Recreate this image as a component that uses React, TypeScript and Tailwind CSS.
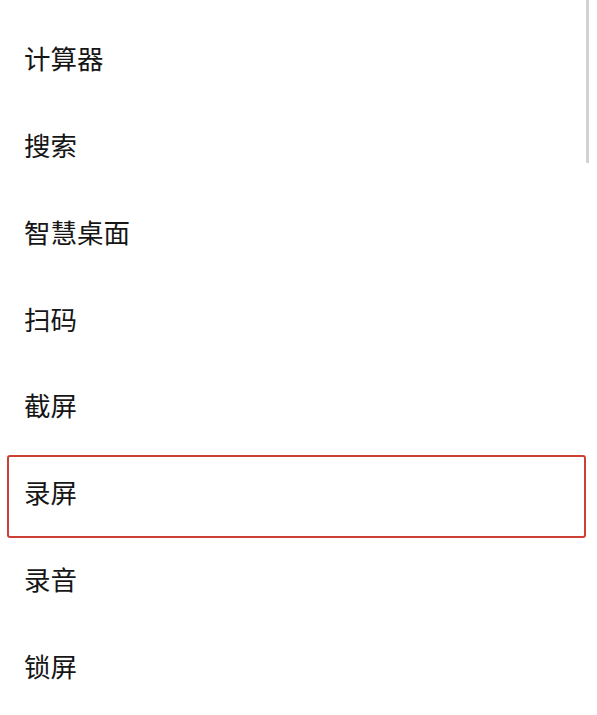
import React from 'react'

const items = ['计算器', '搜索', '智慧桌面', '扫码', '截屏', '录屏', '录音', '锁屏']
const selected = '录屏'

export default function App() {
  return (
    <div
      className="relative w-[597px] h-[715px] overflow-hidden bg-white text-[#161616]"
      style={{ fontFamily: '"Noto Sans CJK SC", "Noto Sans", sans-serif' }}
    >
      {/* scroll indicator */}
      <div className="absolute right-[8px] top-0 w-[3px] h-[163px] bg-[#d2d2d2]" />

      <div className="flex flex-col gap-[3.8px] pt-[21px]">
        {items.map((label) => (
          <div
            key={label}
            className={`ml-[7px] mr-[11px] h-[83px] flex items-center pl-[15px] pb-[8px] rounded-[3px] border-2 ${
              label === selected ? 'border-[#cc4036]' : 'border-transparent'
            }`}
          >
            <span className="text-[26.5px] leading-none">{label}</span>
          </div>
        ))}
      </div>
    </div>
  )
}
